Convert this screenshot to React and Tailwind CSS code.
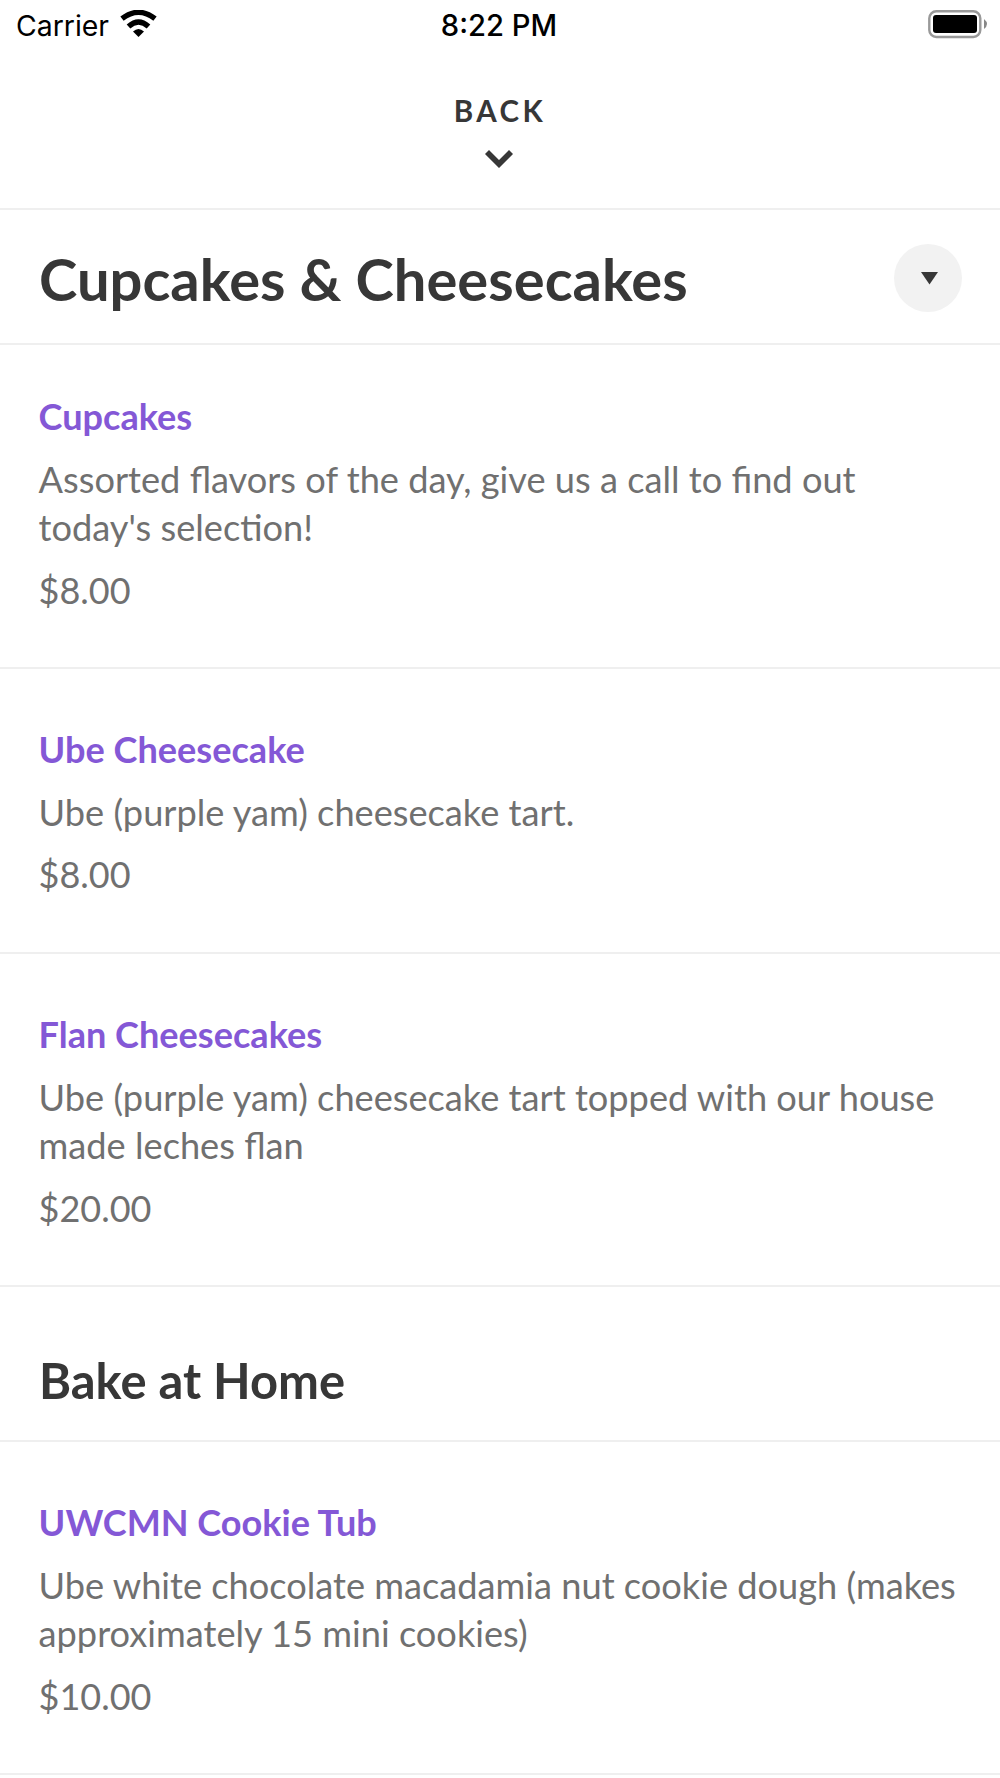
function Item({ name, lines, price, className }) {
  return (
    <article className={`border-b-2 border-[#efefef] pl-[38.6px] ${className}`}>
      <h3 className="text-[36.1px] leading-[48px] font-bold text-[#8458d6] whitespace-nowrap">{name}</h3>
      <div className="mt-[15px] text-[36.2px] leading-[48.4px] text-[#707070] whitespace-nowrap">
        {lines.map((l) => <p key={l}>{l}</p>)}
      </div>
      <p className="mt-[14px] text-[36px] leading-[48px] text-[#707070]">{price}</p>
    </article>
  );
}

export default function App() {
  return (
    <main className="w-[1000px] h-[1778px] overflow-hidden bg-white text-[#373737] font-['Lato',sans-serif]">
      <div className="h-[50px] grid grid-cols-3 items-start font-['Inter',sans-serif] text-black leading-[52px]">
        <div className="flex pl-4">
          <span className="w-[104px] text-[28.4px] whitespace-nowrap">Carrier</span>
          <svg className="mt-[10px]" width="37" height="27" viewBox="0 0 37 27">
            <path d="M18.5 27L13 21.5Q18.5 16.5 24 21.5z" />
            <path d="M8.5 16.5Q18.5 7.5 28.5 16.5M2 8.7Q18.5-4 35 8.7" fill="none" stroke="#000" strokeWidth="5.4" />
          </svg>
        </div>
        <span className="pr-[2px] text-center text-[29.2px] font-medium">8:22 PM</span>
        <svg className="justify-self-end mr-3 mt-[10px]" width="60" height="29" viewBox="0 0 60 29">
          <rect x="1.3" y="1.3" width="51" height="25.7" rx="7" fill="none" stroke="#999" strokeWidth="2.4" />
          <rect x="5" y="5" width="44" height="18" rx="3" />
          <path d="M56 9q6 5 0 10z" fill="#888" />
        </svg>
      </div>
      <header className="h-[160px] border-b-2 border-[#efefef] flex flex-col items-center pt-[41px]">
        <span className="text-[29.5px] leading-[40px] font-bold tracking-[3.5px]">BACK</span>
        <svg className="mt-[19px] mr-[3px]" width="28" height="18" viewBox="0 0 28 18"><path d="M0 4l4-4 10 10L24 0l4 4-14 14z" fill="#373737" /></svg>
      </header>
      <div className="h-[135px] border-b-2 border-[#efefef] flex items-center justify-between pt-[2px] pl-[39px] pr-[38.5px]">
        <h1 className="pt-[2px] text-[57.9px] leading-[70px] font-bold whitespace-nowrap">Cupcakes &amp; Cheesecakes</h1>
        <div className="size-[68px] rounded-full bg-[#f2f2f2] flex items-center justify-center"><svg className="ml-[3px] mt-[2px]" width="17" height="13" viewBox="0 0 17 13"><path d="M0 0h17L8.5 12.5z" fill="#373737" /></svg></div>
      </div>
      <Item className="h-[324px] pt-[47px]" name="Cupcakes" lines={["Assorted flavors of the day, give us a call to find out", "today's selection!"]} price="$8.00" />
      <Item className="h-[285px] pt-[56px]" name="Ube Cheesecake" lines={["Ube (purple yam) cheesecake tart."]} price="$8.00" />
      <Item className="h-[333px] pt-[56px]" name="Flan Cheesecakes" lines={["Ube (purple yam) cheesecake tart topped with our house", "made leches flan"]} price="$20.00" />
      <div className="h-[155px] border-b-2 border-[#efefef] pl-[39px] pt-[63px]">
        <h2 className="text-[48.9px] leading-[60px] font-bold">Bake at Home</h2>
      </div>
      <Item className="h-[333px] pt-[56px]" name="UWCMN Cookie Tub" lines={["Ube white chocolate macadamia nut cookie dough (makes", "approximately 15 mini cookies)"]} price="$10.00" />
    </main>
  );
}
